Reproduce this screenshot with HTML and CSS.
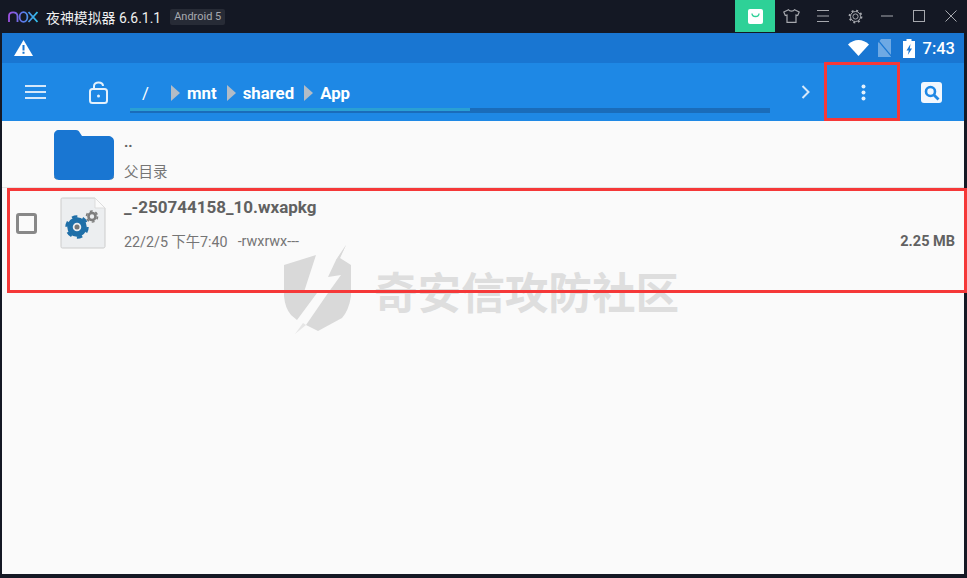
FILE: index.html
```html
<!DOCTYPE html>
<html>
<head>
  <title>夜神模拟器</title>
  <link rel="stylesheet" href="styles.css">
</head>
<body>
  <div class="window">
    <div class="titlebar">
      <svg class="nox-logo" width="30" height="12" viewBox="0 0 30 12" fill="none" stroke-width="1.800">
        <defs>
          <linearGradient id="noxGrad" x1="0" x2="30" y1="0" y2="0" gradientUnits="userSpaceOnUse">
            <stop offset="0" stop-color="#a04fe0"/>
            <stop offset="0.5" stop-color="#5a78e8"/>
            <stop offset="1" stop-color="#2fc4ea"/>
          </linearGradient>
        </defs>
        <path d="M1 11V5C1 .200 9 .200 9.500 5V11" stroke="url(#noxGrad)"/>
        <ellipse cx="15.500" cy="6" rx="3.900" ry="4.800" stroke="url(#noxGrad)"/>
        <path d="M20.500 1L29.500 11M29.500 1L20.500 11" stroke="url(#noxGrad)"/>
      </svg>
      <span class="app-name">夜神模拟器 6.6.1.1</span>
      <span class="badge">Android 5</span>
      <div class="title-actions">
        <div class="shop-btn">
          <svg width="15" height="15" viewBox="0 0 15 15"><rect width="15" height="15" rx="2" fill="#fff"/><path d="M4 4.500C4 8.500 11 8.500 11 4.500" fill="none" stroke="#2ed197" stroke-width="1.300"/></svg>
        </div>
        <div class="win-btn">
          <svg width="17" height="14" viewBox="0 0 17 14" fill="none" stroke="#a6a8ae" stroke-width="1.200"><path d="M5.500 .7L.8 3L2.300 6.500L4 6V13.300H13V6L14.700 6.500L16.200 3L11.500 .7C10.500 2.500 6.500 2.500 5.500 .7Z"/></svg>
        </div>
        <div class="win-btn">
          <svg width="12" height="12" viewBox="0 0 12 12" stroke="#a6a8ae"><path d="M0 .5H12M0 6H12M0 11.500H12"/></svg>
        </div>
        <div class="win-btn">
          <svg width="15" height="15" viewBox="0 0 15 15" fill="none" stroke="#a6a8ae"><circle cx="7.500" cy="7.500" r="2.600"/><circle cx="7.500" cy="7.500" r="5"/><circle cx="7.500" cy="7.500" r="6" stroke-width="1.800" stroke-dasharray="2 2.700"/></svg>
        </div>
        <div class="win-btn">
          <svg width="12" height="2" viewBox="0 0 12 2" stroke="#a6a8ae"><path d="M0 1H12"/></svg>
        </div>
        <div class="win-btn">
          <svg width="12" height="12" viewBox="0 0 12 12" fill="none" stroke="#a6a8ae"><rect x=".5" y=".5" width="11" height="11"/></svg>
        </div>
        <div class="win-btn">
          <svg width="12" height="12" viewBox="0 0 12 12" stroke="#a6a8ae"><path d="M.5 .5L11.500 11.500M11.500 .5L.5 11.500"/></svg>
        </div>
      </div>
    </div>

    <div class="screen">
      <div class="statusbar">
        <svg class="warn-icon" width="19" height="16" viewBox="0 0 19 16"><path d="M9.500 0L19 16H0Z" fill="#fff"/><path d="M8.500 5H10.500V10.500H8.500ZM8.500 11.800H10.500V13.800H8.500Z" fill="#1976d2"/></svg>
        <div class="status-right">
          <svg width="21" height="16" viewBox="0 0 21 16"><path d="M0 4.500C6 -1.500 15 -1.500 21 4.500L10.500 16Z" fill="#fff"/></svg>
          <svg class="sim" width="15" height="18" viewBox="0 0 15 18"><path d="M4 0H14V18H1V4Z" fill="#6ea9e4"/><path d="M0 0L15 18" stroke="#1976d2" stroke-width="1.200"/></svg>
          <svg class="battery" width="12" height="19" viewBox="0 0 12 19"><path d="M3.500 0H8.500V2H12V19H0V2H3.500Z" fill="#fff"/><path d="M7.500 5L3.500 11.500H5.800L4.800 16L9 9.500H6.800Z" fill="#1976d2"/></svg>
          <span class="clock">7:43</span>
        </div>
      </div>

      <div class="toolbar">
        <svg class="menu-icon" width="21" height="14" viewBox="0 0 21 14" stroke="#d5e8fa" stroke-width="2"><path d="M0 1H21M0 7H21M0 13H21"/></svg>
        <svg class="lock-icon" width="19" height="23" viewBox="0 0 19 23" fill="none" stroke="#e4f1fc" stroke-width="2"><rect x="1" y="8" width="17" height="14" rx="2.500"/><path d="M5 8V5C5 .200 14 .200 14 5"/><circle cx="9.500" cy="15" r="1.500" fill="#e4f1fc" stroke="none"/></svg>
        <div class="path-wrap">
          <div class="crumbs">
            <span class="crumb root">/</span>
            <i class="sep"></i>
            <span class="crumb">mnt</span>
            <i class="sep"></i>
            <span class="crumb">shared</span>
            <i class="sep"></i>
            <span class="crumb">App</span>
          </div>
          <div class="progress"><div class="progress-fill"></div></div>
        </div>
        <svg class="chevron" width="9" height="14" viewBox="0 0 9 14" fill="none" stroke="#d5e8fa" stroke-width="2"><path d="M1.500 1L7.500 7L1.500 13"/></svg>
        <svg class="dots" width="5" height="17" viewBox="0 0 5 17" fill="#e4f1fc"><circle cx="2.500" cy="2.500" r="2"/><circle cx="2.500" cy="8.500" r="2"/><circle cx="2.500" cy="14.500" r="2"/></svg>
        <svg class="search-icon" width="21" height="21" viewBox="0 0 21 21"><rect width="21" height="21" rx="3" fill="#f2f8fe"/><circle cx="9.500" cy="9.500" r="4.500" fill="none" stroke="#1e88e5" stroke-width="2.600"/><path d="M13 13L17.500 17.500" stroke="#1e88e5" stroke-width="2.800"/></svg>
      </div>

      <div class="file-list">
        <div class="row parent-row">
          <svg class="folder" width="60" height="50" viewBox="0 0 60 50"><path d="M5 0H22C24 0 25 1 26 3L28 6H54C57 6 60 8 60 11V44C60 48 57 50 54 50H6C3 50 0 48 0 44V5C0 2 2 0 5 0Z" fill="#1976d2"/><path d="M0 44C0 48 3 50 6 50H54C57 50 60 48 60 44V46C60 49 57 50 54 50H6C3 50 0 49 0 46Z" fill="#14568f"/></svg>
          <div class="row-text">
            <div class="dotdot">..</div>
            <div class="sub">父目录</div>
          </div>
        </div>
        <div class="row file-row">
          <div class="checkbox"></div>
          <svg class="file-icon" width="46" height="52" viewBox="0 0 46 52">
            <path d="M2.500 1H35L45 11V49.500C45 50.500 44 51 43 51H2.500C1.500 51 1 50.500 1 49.500V2.500C1 1.500 1.500 1 2.500 1Z" fill="#eceef0" stroke="#cccccc"/>
            <path d="M35 1V11H45Z" fill="#fbfbfb" stroke="#dddddd"/>
            <circle cx="17" cy="30" r="7" fill="none" stroke="#1f6fa8" stroke-width="5.500"/>
            <circle cx="17" cy="30" r="10.500" fill="none" stroke="#1f6fa8" stroke-width="2.500" stroke-dasharray="5.500 5.500"/>
            <circle cx="17" cy="30" r="2.500" fill="#777"/>
            <circle cx="32" cy="19.500" r="3.500" fill="none" stroke="#7d7d7d" stroke-width="2.600"/>
            <circle cx="32" cy="19.500" r="5.500" fill="none" stroke="#7d7d7d" stroke-width="1.600" stroke-dasharray="2.900 2.860"/>
          </svg>
          <div class="row-text">
            <div class="file-name">_-250744158_10.wxapkg</div>
            <div class="file-meta">
              <span>22/2/5 下午7:40</span>
              <span>-rwxrwx---</span>
              <span class="file-size">2.25 MB</span>
            </div>
          </div>
        </div>
      </div>

      <div class="watermark">
        <svg width="76" height="100" viewBox="0 0 76 100" fill="#d9d9d9">
          <path d="M6 25L38 15L26 52L39 53L19 80L13 75Q7 68 6 56Z"/>
          <path d="M68 5L62 18L73 25V56Q71 70 64 78L40 91L28 85L50 53L63 35L50 37L58 20Z"/>
          <path d="M68 5L58 20L61 20ZM28 85L17 94L25 83Z" opacity="0.6"/>
        </svg>
        <span class="wm-text">奇安信攻防社区</span>
      </div>
    </div>

    <div class="mark mark-menu"></div>
    <div class="mark mark-row"></div>
  </div>
</body>
</html>
```

FILE: styles.css
```css
html, body { margin: 0; padding: 0; height: 100%; overflow: hidden; }
body { font-family: Roboto, "Noto Sans CJK SC", sans-serif; background-color: #141824; }

.window { position: relative; width: 967px; height: 578px; display: flex; flex-direction: column; }

.titlebar { height: 33px; display: flex; align-items: center; flex-shrink: 0; }
.nox-logo { margin-left: 8px; }
.app-name { margin-left: 8px; font-size: 13.9px; color: #f0f0f0; }
.badge { margin-left: 9px; padding: 0 4px; height: 16px; line-height: 16px; font-size: 11px; color: #a8aab0; background-color: #272b36; border-radius: 2px; }
.title-actions { margin-left: auto; display: flex; height: 32px; align-self: flex-start; }
.shop-btn { width: 40px; height: 32px; background-color: #2ed197; display: flex; align-items: center; justify-content: center; }
.win-btn { width: 32px; height: 32px; display: flex; align-items: center; justify-content: center; }

.screen { position: relative; margin: 0 3px 4px 2px; flex: 1; display: flex; flex-direction: column; background-color: #fafafa; overflow: hidden; }

.statusbar { height: 30px; background-color: #1976d2; display: flex; align-items: center; flex-shrink: 0; }
.warn-icon { margin-left: 12px; }
.status-right { margin-left: auto; display: flex; align-items: center; color: #fff; padding-right: 9px; }
.status-right .sim { margin-left: 8px; }
.status-right .battery { margin-left: 11px; }
.clock { margin-left: 8px; font-size: 16.5px; font-weight: 500; }

.toolbar { height: 58px; background-color: #1e88e5; display: flex; align-items: center; flex-shrink: 0; }
.menu-icon { margin-left: 23px; }
.lock-icon { margin-left: 43px; }
.path-wrap { margin-left: 22px; width: 640px; align-self: flex-end; padding-bottom: 8px; }
.crumbs { height: 24px; display: flex; align-items: center; padding-left: 12px; }
.crumb { font-size: 16.8px; font-weight: 700; color: #fff; }
.crumb.root { font-weight: 400; width: 19px; }
.sep { width: 0; height: 0; margin: 0 7px 0 10px; border-style: solid; border-width: 8px 0 8px 9px; border-color: transparent transparent transparent #b3bcc6; }
.progress { height: 5px; margin-top: 3px; background-color: #1a6cba; }
.progress-fill { width: 340px; height: 3px; background-color: #2aa0d4; }
.chevron { margin-left: 31px; }
.dots { margin-left: 51px; }
.search-icon { margin-left: 55px; }

.row { display: flex; }
.parent-row { height: 67px; border-bottom: 1px solid #e4e4e4; box-sizing: border-box; padding: 9px 0 0 52px; }
.parent-row .row-text { margin-left: 10px; }
.dotdot { font-size: 15px; font-weight: 700; color: #616161; height: 30px; line-height: 24px; }
.sub { font-size: 14.5px; color: #757575; }
.file-row { padding-top: 9px; padding-left: 14px; flex: 1; }
.checkbox { box-sizing: border-box; width: 21px; height: 21px; margin-top: 16px; border: 3px solid #888888; border-radius: 3px; }
.file-icon { margin-left: 23px; }
.file-row .row-text { margin-left: 18px; flex: 1; padding-right: 9px; }
.file-name { margin-top: -1px; font-size: 17px; font-weight: 700; color: #616161; line-height: 22px; }
.file-meta { display: flex; gap: 10px; align-items: center; margin-top: 12px; font-size: 14.3px; color: #757575; }
.file-size { margin-left: auto; padding-top: 2px; font-size: 14.5px; font-weight: 700; color: #616161; }

.watermark { position: absolute; left: 276px; top: 207px; display: flex; align-items: center; gap: 20px; }
.wm-text { font-family: "Noto Sans CJK SC", sans-serif; font-weight: 700; font-size: 43.6px; line-height: 50px; color: #dedede; white-space: nowrap; }

.mark { position: absolute; box-sizing: border-box; border: 3px solid #f53838; }
.mark-menu { left: 824px; top: 62px; width: 76px; height: 59px; }
.mark-row { left: 7px; top: 188px; width: 960px; height: 105px; }
```
